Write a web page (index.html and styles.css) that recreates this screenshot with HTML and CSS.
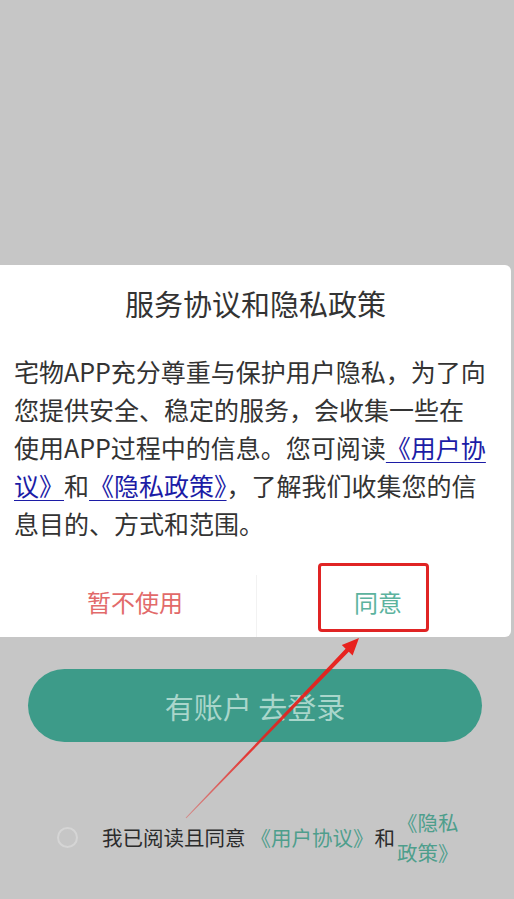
FILE: index.html
```html
<!DOCTYPE html>
<html lang="zh">
<head>
<meta charset="UTF-8">
<meta name="viewport" content="width=device-width,initial-scale=1">
<title>服务协议和隐私政策</title>
<link rel="stylesheet" href="styles.css">
</head>
<body>
<div class="screen">
  <div class="dialog">
    <h2 class="title">服务协议和隐私政策</h2>
    <p class="desc">宅物APP充分尊重与保护用户隐私，为了向<br>您提供安全、稳定的服务，会收集一些在<br>使用APP过程中的信息。您可阅读<a href="#">《用户协<br>议》</a>和<a href="#">《隐私政策》</a>，了解我们收集您的信<br>息目的、方式和范围。</p>
    <div class="actions">
      <button class="btn no">暂不使用</button>
      <span class="sep"></span>
      <button class="btn yes">同意</button>
    </div>
  </div>

  <button class="login">有账户 去登录</button>

  <div class="agree">
    <span class="radio"></span>
    <span class="txt">我已阅读且同意</span>
    <a class="lnk first" href="#">《用户协议》</a>
    <span class="and">和</span>
    <a class="lnk wrap" href="#">《隐私政策》</a>
  </div>

  <!-- 标注 -->
  <div class="mark"></div>
  <svg class="arrow" width="514" height="899" viewBox="0 0 514 899">
    <defs>
      <linearGradient id="ag" x1="186" y1="818" x2="359" y2="638" gradientUnits="userSpaceOnUse">
        <stop offset="0" stop-color="#e8201c" stop-opacity=".35"/>
        <stop offset=".35" stop-color="#e8201c" stop-opacity=".85"/>
        <stop offset="1" stop-color="#e8201c"/>
      </linearGradient>
    </defs>
    <polygon fill="url(#ag)" points="185.6,817.7 345.6,648.8 341.8,645.1 359,638 352.6,655.5 348.8,651.8 186.4,818.3"/>
  </svg>
</div>
</body>
</html>
```

FILE: styles.css
```css
:root{--mask:#c6c6c6;--txt:#333;--link:#1c1ca6;--green:#3d9b89;--teal:#5cb39e;--red:#e26a6a}
*{box-sizing:border-box;margin:0;padding:0;font-family:"Noto Sans CJK SC","Noto Sans",sans-serif}
body{background:var(--mask);width:514px;height:899px;overflow:hidden}
.screen{position:relative;height:899px;padding-top:265px}

.dialog{width:511px;background:#fff;border-radius:0 6px 6px 0;padding-top:18px}
.title{font-size:29px;font-weight:400;line-height:40px;text-align:center;color:var(--txt)}
.desc{margin-top:29px;padding:0 14px;font-size:25px;line-height:38px;color:var(--txt);white-space:nowrap}
.desc a{color:var(--link);text-decoration:underline;text-decoration-thickness:1px;text-underline-offset:4px}
.actions{display:flex;margin-top:23px;height:72px}
.btn{flex:1;border:none;background:none;font-size:24px;cursor:pointer}
.btn.no{color:var(--red);padding-left:14px}
.btn.yes{color:var(--teal);padding-right:12px}
.sep{width:1px;margin-top:10px;background:#f2f2f2}

.login{display:block;margin:32px 0 0 28px;width:454px;height:73px;border:none;border-radius:37px;
  background:var(--green);color:#a9d6cb;font-size:29px;cursor:pointer}

.agree{display:flex;align-items:center;margin:65px 0 0 57px;height:60px;font-size:20.5px;line-height:30px}
.radio{width:21px;height:21px;border:2px solid #d5d5d5;border-radius:50%;margin-right:24px}
.txt{color:#2b2b2b}
.lnk{color:#4e9e8c;text-decoration:none}
.lnk.first{margin-left:5px}
.and{color:#2b2b2b;margin:0 2px 0 1px}
.wrap{display:inline-block;width:62px;white-space:normal}

.mark{position:absolute;left:318px;top:563px;width:111px;height:69px;border:3px solid #e02424;border-radius:4px}
.arrow{position:absolute;left:0;top:0;pointer-events:none}
```
